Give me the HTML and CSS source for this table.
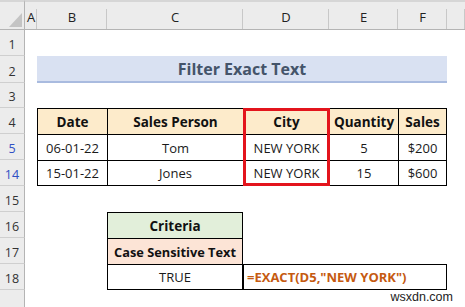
FILE: index.html
```html
<!DOCTYPE html>
<html>
<head>
<meta charset="utf-8">
<link rel="stylesheet" href="styles.css">
</head>
<body>
<div class="sheet">
  <div class="corner"><svg width="25" height="30" viewBox="0 0 25 30"><polygon points="22,13 22,27 9,27" fill="#c4c4c4"/></svg></div>
  <div class="colhdr c-A">A</div>
  <div class="colhdr c-B">B</div>
  <div class="colhdr c-C">C</div>
  <div class="colhdr c-D">D</div>
  <div class="colhdr c-E">E</div>
  <div class="colhdr c-F">F</div>
  <div class="colhdr c-G"></div>

  <div class="rowhdr r-1">1</div>
  <div class="rowhdr r-2">2</div>
  <div class="rowhdr r-3">3</div>
  <div class="rowhdr r-4">4</div>
  <div class="rowhdr r-5 filtered">5</div>
  <div class="rowhdr r-14 filtered">14</div>
  <div class="rowhdr r-15">15</div>
  <div class="rowhdr r-16">16</div>
  <div class="rowhdr r-17">17</div>
  <div class="rowhdr r-18">18</div>
  <div class="rowhdr r-19"></div>

  <div class="title r-2">Filter Exact Text</div>

  <div class="cell th first c-B r-4">Date</div>
  <div class="cell th c-C r-4">Sales Person</div>
  <div class="cell th c-D r-4">City</div>
  <div class="cell th c-E r-4">Quantity</div>
  <div class="cell th last c-F r-4">Sales</div>

  <div class="cell first c-B r-5">06-01-22</div>
  <div class="cell c-C r-5">Tom</div>
  <div class="cell c-D r-5">NEW YORK</div>
  <div class="cell c-E r-5">5</div>
  <div class="cell last c-F r-5">$200</div>

  <div class="cell first bottom c-B r-14">15-01-22</div>
  <div class="cell bottom c-C r-14">Jones</div>
  <div class="cell bottom c-D r-14">NEW YORK</div>
  <div class="cell bottom c-E r-14">15</div>
  <div class="cell bottom last c-F r-14">$600</div>

  <div class="redbox"></div>

  <div class="cell first last crit-head c-C r-16">Criteria</div>
  <div class="cell first last crit-sub c-C r-17">Case Sensitive Text</div>
  <div class="cell first last bottom c-C r-18">TRUE</div>
  <div class="cell last bottom formula r-18">=EXACT(D5,"NEW YORK")</div>

  <div class="watermark r-19">wsxdn.com</div>
</div>
</body>
</html>
```

FILE: styles.css
```css
html, body {
  margin: 0;
  padding: 0;
  background: #ffffff;
}

.sheet {
  width: 465px;
  height: 307px;
  overflow: hidden;
  display: grid;
  grid-template-columns: 25px 12px 70px 136px 86px 69px 49px 18px;
  grid-template-rows: 30px 26px 27px 25px 26px 26px 26px 26px 26px 26px 26px 17px;
  font-family: "Open Sans", "Liberation Sans", sans-serif;
  font-size: 13px;
  color: #1a1a1a;
}

/* column placement */
.c-A { grid-column: 2; }
.c-B { grid-column: 3; }
.c-C { grid-column: 4; }
.c-D { grid-column: 5; }
.c-E { grid-column: 6; }
.c-F { grid-column: 7; }
.c-G { grid-column: 8; }

/* row placement */
.r-1 { grid-row: 2; }
.r-2 { grid-row: 3; }
.r-3 { grid-row: 4; }
.r-4 { grid-row: 5; }
.r-5 { grid-row: 6; }
.r-14 { grid-row: 7; }
.r-15 { grid-row: 8; }
.r-16 { grid-row: 9; }
.r-17 { grid-row: 10; }
.r-18 { grid-row: 11; }
.r-19 { grid-row: 12; }

.corner {
  grid-column: 1;
  grid-row: 1;
  background: #ececec;
  border-top: 2px solid #d6d6d6;
  border-bottom: 1px solid #b4b4b4;
  border-right: 1px solid #b4b4b4;
  box-sizing: border-box;
  overflow: hidden;
}
.corner svg {
  display: block;
  margin-top: -2px;
}

.colhdr {
  grid-row: 1;
  background-color: #ececec;
  background-image: linear-gradient(#c8c8c8, #c8c8c8);
  background-repeat: no-repeat;
  background-size: 1px 20px;
  background-position: right bottom;
  border-top: 2px solid #d6d6d6;
  border-bottom: 1px solid #b4b4b4;
  box-sizing: border-box;
  display: flex;
  align-items: flex-end;
  justify-content: center;
  padding-bottom: 4px;
  font-size: 13px;
  color: #222;
  line-height: 15px;
}

.rowhdr {
  grid-column: 1;
  background: #ececec;
  border-right: 1px solid #b4b4b4;
  border-bottom: 1px solid #cfcfcf;
  box-sizing: border-box;
  display: flex;
  align-items: flex-end;
  justify-content: center;
  padding-bottom: 3px;
  font-size: 12.5px;
  line-height: 15px;
  color: #333;
}
.rowhdr.filtered {
  color: #2f4fc4;
}
.rowhdr.r-19 {
  border-bottom: none;
}

.title {
  grid-column: 3 / 8;
  background: #d9e1f2;
  border-bottom: 2px solid #a9bbdf;
  box-sizing: border-box;
  display: flex;
  align-items: center;
  justify-content: center;
  font-size: 16px;
  font-weight: 700;
  color: #44546a;
  padding-top: 1px;
}

.cell {
  box-sizing: border-box;
  border-top: 1px solid #000;
  border-left: 1px solid #000;
  display: flex;
  align-items: center;
  justify-content: center;
  white-space: nowrap;
  line-height: 16px;
}
.cell.last {
  border-right: 1px solid #000;
}
.cell.bottom {
  border-bottom: 1px solid #000;
}
.cell.th {
  background: #fdebcb;
  font-weight: 700;
  color: #111;
  font-size: 13.5px;
}

.redbox {
  grid-column: 5;
  grid-row: 5 / 8;
  border: 3px solid #e3141c;
  margin: 0 -1px 0 0;
  z-index: 2;
}

.crit-head {
  background: #e2efda;
  font-weight: 700;
  color: #111;
  font-size: 13.5px;
}
.crit-sub {
  background: #fce4d6;
  font-weight: 700;
  color: #111;
  font-size: 12.8px;
}

.formula {
  grid-column: 5 / 8;
  justify-content: flex-start;
  padding-left: 3px;
  font-weight: 700;
  color: #c55a11;
}

.watermark {
  grid-column: 6 / 9;
  justify-self: end;
  margin-right: 12px;
  font-family: "Liberation Sans", Arial, sans-serif;
  font-size: 12.5px;
  line-height: 15px;
  color: #222;
}
```
